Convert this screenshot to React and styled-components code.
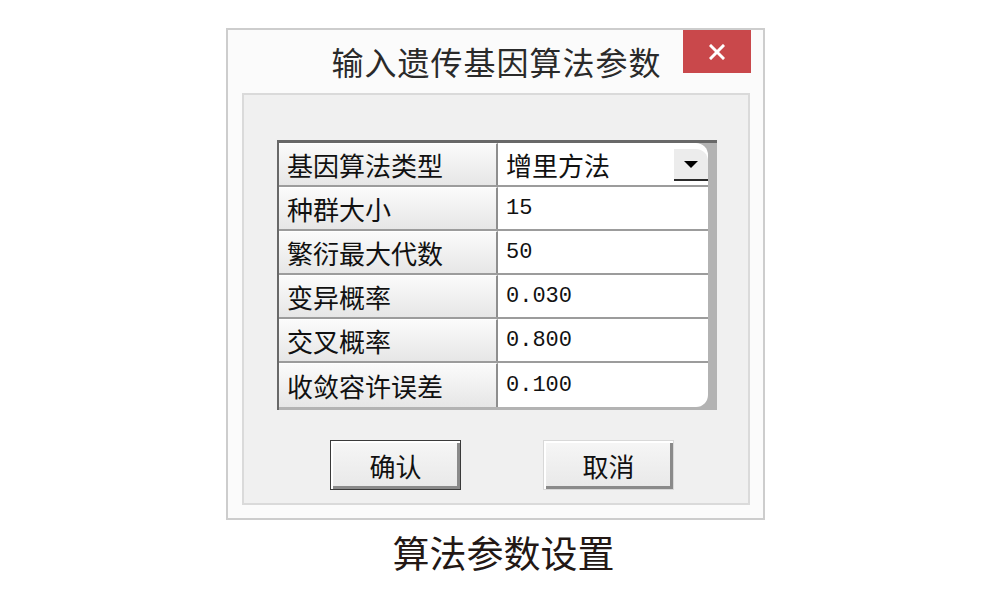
import React from 'react';
import styled, { createGlobalStyle } from 'styled-components';

const GlobalStyle = createGlobalStyle`
  html, body {
    margin: 0;
    padding: 0;
    background: #ffffff;
  }
  * {
    box-sizing: border-box;
  }
`;

const CJK = `"Noto Sans CJK SC", "Noto Sans", sans-serif`;

const rows = [
  { label: '基因算法类型', value: '增里方法', select: true },
  { label: '种群大小', value: '15' },
  { label: '繁衍最大代数', value: '50' },
  { label: '变异概率', value: '0.030' },
  { label: '交叉概率', value: '0.800' },
  { label: '收敛容许误差', value: '0.100' },
];

const App = () => (
  <Page>
    <GlobalStyle />
    <Window>
      <TitleBar>
        <span />
        <Title>输入遗传基因算法参数</Title>
        <CloseButton aria-label="关闭">
          <svg width="16" height="16" viewBox="0 0 16 16">
            <path d="M2 2 L14 14 M14 2 L2 14" stroke="#ffffff" strokeWidth="3" strokeLinecap="square" />
          </svg>
        </CloseButton>
      </TitleBar>
      <Panel>
        <Grid>
          {rows.map((row, i) => (
            <Row key={row.label} last={i === rows.length - 1}>
              <LabelCell>{row.label}</LabelCell>
              <ValueCell first={i === 0} last={i === rows.length - 1}>
                {row.select ? (
                  <>
                    <SelectText>{row.value}</SelectText>
                    <DropButton>
                      <svg width="16" height="9" viewBox="0 0 16 9">
                        <path d="M1 1 L15 1 L8 8 Z" fill="#000" />
                      </svg>
                    </DropButton>
                  </>
                ) : (
                  <NumberText>{row.value}</NumberText>
                )}
              </ValueCell>
            </Row>
          ))}
        </Grid>
        <ButtonRow>
          <DialogButton isDefault>确认</DialogButton>
          <DialogButton>取消</DialogButton>
        </ButtonRow>
      </Panel>
    </Window>
    <Caption>算法参数设置</Caption>
  </Page>
);

const Page = styled.div`
  width: 1000px;
  height: 599px;
  display: flex;
  flex-direction: column;
  padding-top: 28px;
  overflow: hidden;
`;

const Window = styled.div`
  width: 539px;
  height: 492px;
  margin-left: 226px;
  border: 2px solid #cdcdcd;
  background: #fbfbfb;
  display: flex;
  flex-direction: column;
`;

const TitleBar = styled.div`
  height: 63px;
  display: grid;
  grid-template-columns: 1fr auto 1fr;
  align-items: start;
  padding-right: 12px;
`;

const Title = styled.div`
  font-family: ${CJK};
  font-size: 32px;
  color: #2a2a2a;
  line-height: 63px;
  letter-spacing: 1px;
  padding-left: 14px;
`;

const CloseButton = styled.div`
  justify-self: end;
  width: 68px;
  height: 43px;
  background: #c9484b;
  display: flex;
  align-items: center;
  justify-content: center;
`;

const Panel = styled.div`
  flex: 1;
  margin: 0 13px 13px 14px;
  border: 2px solid #dadada;
  background: #f0f0f0;
  padding: 45px 0 0 33px;
  display: flex;
  flex-direction: column;
`;

const Grid = styled.div`
  width: 440px;
  height: 270px;
  background: #b3b3b3;
  border-top: 3px solid #686868;
  border-left: 2px solid #686868;
  padding-right: 9px;
  display: flex;
  flex-direction: column;
`;

const Row = styled.div`
  height: 44px;
  display: grid;
  grid-template-columns: 219px 1fr;
  border-bottom: ${({ last }) => (last ? '0' : '2px solid #9c9c9c')};
`;

const LabelCell = styled.div`
  font-family: ${CJK};
  font-size: 26px;
  color: #111;
  padding-left: 8px;
  display: flex;
  align-items: center;
  background: linear-gradient(#fbfbfb, #e6e6e6);
  border-top: 1px solid #ffffff;
  border-right: 2px solid #8e8e8e;
  white-space: nowrap;
`;

const ValueCell = styled.div`
  background: #ffffff;
  display: flex;
  align-items: center;
  padding-left: 8px;
  border-top-right-radius: ${({ first }) => (first ? '12px' : '0')};
  border-bottom-right-radius: ${({ last }) => (last ? '12px' : '0')};
`;

const SelectText = styled.span`
  font-family: ${CJK};
  font-size: 26px;
  color: #111;
  flex: 1;
`;

const NumberText = styled.span`
  font-family: "Liberation Mono", "DejaVu Sans Mono", monospace;
  font-size: 22px;
  color: #111;
`;

const DropButton = styled.div`
  align-self: stretch;
  width: 34px;
  margin: 6px 0 4px;
  background: #ececec;
  border-top-right-radius: 12px;
  border-bottom: 2px solid #2a2a2a;
  display: flex;
  align-items: center;
  justify-content: center;
`;

const ButtonRow = styled.div`
  display: flex;
  gap: 82px;
  padding-left: 53px;
  margin-top: 30px;
`;

const DialogButton = styled.div`
  width: 131px;
  height: 50px;
  font-family: ${CJK};
  font-size: 26px;
  color: #111;
  display: flex;
  align-items: center;
  justify-content: center;
  background: linear-gradient(#f6f6f6, #e8e8e8);
  border: 1px solid ${({ isDefault }) => (isDefault ? '#3a3a3a' : '#d8d8d8')};
  box-shadow: inset 2px 2px 0 #ffffff, inset -3px -3px 0 #8a8a8a;
`;

const Caption = styled.div`
  margin-top: 10px;
  padding-left: 7px;
  text-align: center;
  font-family: ${CJK};
  font-size: 37px;
  line-height: 44px;
  color: #231815;
`;

export default App;
